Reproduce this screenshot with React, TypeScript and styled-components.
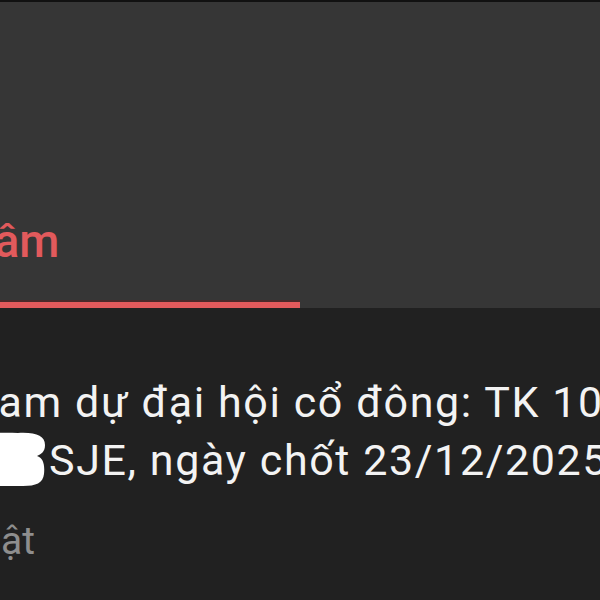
import styled, { createGlobalStyle } from "styled-components";

const GlobalStyle = createGlobalStyle`
  html, body {
    margin: 0;
    padding: 0;
    background: #212121;
  }
`;

const Screen = styled.div`
  width: 600px;
  height: 600px;
  overflow: hidden;
  display: flex;
  flex-direction: column;
  background: #212121;
  font-family: Roboto, "Noto Sans", sans-serif;
  border-top: 2px solid #111111;
  box-sizing: border-box;
`;

const TabBar = styled.div`
  height: 306px;
  flex-shrink: 0;
  background: #363636;
  display: flex;
  align-items: flex-end;
`;

const Tab = styled.div`
  width: 300px;
  display: flex;
  flex-direction: column;
`;

const TabLabel = styled.span<{ $active?: boolean }>`
  font-size: 46px;
  line-height: 46px;
  font-weight: 500;
  color: ${(p) => (p.$active ? "#e25a5c" : "#bdbdbd")};
  white-space: nowrap;
  margin-left: -140px;
  padding-bottom: 36px;
`;

const Indicator = styled.div<{ $active?: boolean }>`
  height: 6px;
  background: ${(p) => (p.$active ? "#e25a5c" : "transparent")};
  border-top: 2px solid ${(p) => (p.$active ? "#4a2a2b" : "transparent")};
`;

const Notice = styled.div`
  padding-top: 65px;
  display: flex;
  flex-direction: column;
`;

const Line = styled.div`
  font-size: 43px;
  line-height: 58px;
  letter-spacing: 1.6px;
  color: #f3f3f3;
  white-space: nowrap;
  margin-left: -54px;
`;

const Scribble = styled.svg`
  width: 100px;
  height: 54px;
  vertical-align: -11px;
  margin-right: 3px;
`;

const Meta = styled.div`
  margin-top: 28px;
  font-size: 39px;
  line-height: 48px;
  color: #8e8e8e;
  white-space: nowrap;
  margin-left: -120px;
`;

export default function App() {
  return (
    <>
      <GlobalStyle />
      <Screen>
        <TabBar>
          <Tab>
            <TabLabel $active>Quan tâm</TabLabel>
            <Indicator $active />
          </Tab>
        </TabBar>
        <Notice>
          <Line>Tham dự đại hội cổ đông: TK 10</Line>
          <Line>
            <Scribble viewBox="0 0 100 54">
              <path
                d="M4 6 C20 2 50 0 72 1 C90 0 99 4 99 13 C99 20 95 22 91 24 C97 26 99 32 98 42 C97 51 90 54 77 54 L10 54 C3 54 0 48 0 40 L0 14 C0 9 1 7 4 6 Z"
                fill="#ffffff"
              />
            </Scribble>
            SJE, ngày chốt 23/12/2025
          </Line>
          <Meta>Chủ nhật</Meta>
        </Notice>
      </Screen>
    </>
  );
}
